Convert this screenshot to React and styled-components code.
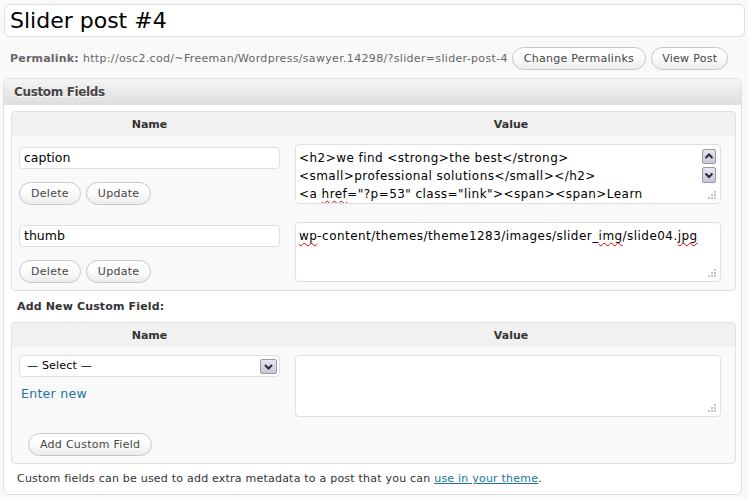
import React from 'react';
import styled, { createGlobalStyle } from 'styled-components';

const Global = createGlobalStyle`
  html, body { margin: 0; padding: 0; background: #f9f9f9; }
  body { font-family: "DejaVu Sans", Verdana, sans-serif; color: #333; font-size: 11px; }
  * { box-sizing: border-box; }
`;

const Page = styled.div`
  width: 748px;
  height: 499px;
  padding: 4px 3px 0 3px;
  display: flex;
  flex-direction: column;
`;

const TitleBox = styled.div`
  margin-left: 1px;
  width: 741px;
  height: 33px;
  background: #fff;
  border: 1px solid #dfdfdf;
  border-radius: 6px;
  font-size: 22px;
  line-height: 31px;
  padding-left: 5px;
  color: #000;
`;

const PermaRow = styled.div`
  margin-top: 10px;
  height: 22px;
  display: flex;
  align-items: center;
  padding-left: 7px;
  color: #666;
  font-size: 11px;
  letter-spacing: 0.33px;
`;

const PermaLabel = styled.strong`
  color: #666;
  margin-right: 4px;
  letter-spacing: 0.2px;
`;

const Button = styled.span`
  display: inline-flex;
  align-items: center;
  justify-content: center;
  height: 23px;
  padding: 0 ${p => p.$pad || 9}px;
  margin-left: ${p => p.$ml || 0}px;
  border: 1px solid #c8c8c8;
  border-radius: 12px;
  background: linear-gradient(#ffffff 0%, #fbfbfb 50%, #ececec 100%);
  color: #464646;
  font-size: 11px;
  letter-spacing: 0.28px;
  white-space: nowrap;
  flex: none;
`;

const Box = styled.div`
  margin-top: 9px;
  width: 739px;
  background: #fff;
  border: 1px solid #dfdfdf;
  border-radius: 6px;
  overflow: hidden;
`;

const BoxHeader = styled.div`
  height: 26px;
  background: linear-gradient(#f5f5f5, #dedede);
  padding-left: 10px;
  display: flex;
  align-items: center;
  font-weight: bold;
  font-size: 12px;
  letter-spacing: -0.35px;
  color: #464646;
  text-shadow: 0 1px 0 #fff;
`;

const BoxBody = styled.div`
  padding: 6px 5px 0 7px;
`;

const Table = styled.div`
  border: 1px solid #dfdfdf;
  border-radius: 4px;
  background: #f9f9f9;
  overflow: hidden;
`;

const HeadRow = styled.div`
  display: grid;
  grid-template-columns: 275px 1fr;
  height: 24px;
  background: #f1f1f1;
  font-weight: bold;
  font-size: 11px;
  color: #333;
`;

const HeadCell = styled.div`
  display: flex;
  align-items: center;
  justify-content: center;
`;

const Row = styled.div`
  display: grid;
  grid-template-columns: 275px 1fr;
  align-items: start;
  padding-bottom: ${p => p.$pb || 0}px;
`;

const LeftCell = styled.div`
  padding: ${p => p.$pt ?? 11}px 8px 0 7px;
  display: flex;
  flex-direction: column;
  align-items: flex-start;
`;

const RightCell = styled.div`
  padding: ${p => p.$pt ?? 8}px 14px 0 8px;
`;

const TextInput = styled.div`
  width: 261px;
  height: 22px;
  background: #fff;
  border: 1px solid #dfdfdf;
  border-radius: 4px;
  padding-left: 4px;
  font-size: 12.5px;
  line-height: 20px;
  color: #000;
`;

const ButtonRow = styled.div`
  display: flex;
  gap: 5px;
  margin-top: 13px;
`;

const Area = styled.div`
  position: relative;
  width: 426px;
  height: ${p => p.$h || 60}px;
  background: #fff;
  border: 1px solid #dfdfdf;
  border-radius: 4px;
  padding: 4px 0 0 3px;
  font-size: 12px;
  line-height: 18px;
  letter-spacing: 0.45px;
  color: #000;
  overflow: hidden;
  white-space: nowrap;
`;

const Spell = styled.span`
  text-decoration: underline wavy #e00000;
  text-decoration-thickness: 1px;
  text-underline-offset: 2px;
`;

const ScrollBtn = styled.svg`
  position: absolute;
  left: 406px;
  top: ${p => p.$top}px;
`;

const Grip = styled.svg`
  position: absolute;
  right: 4px;
  bottom: 4px;
`;

const SelectBox = styled.div`
  position: relative;
  width: 261px;
  height: 22px;
  background: #fff;
  border: 1px solid #dfdfdf;
  border-radius: 4px;
  padding-left: 7px;
  font-size: 11px;
  line-height: 20px;
  letter-spacing: 0.2px;
  color: #000;
`;

const DropBtn = styled.svg`
  position: absolute;
  left: 240px;
  top: 3px;
`;

const Link = styled.a`
  color: #21759b;
  text-decoration: ${p => (p.$u ? 'underline' : 'none')};
`;

const EnterNew = styled(Link)`
  margin-top: 9px;
  margin-left: 2px;
  font-size: 12.5px;
  line-height: 15px;
  letter-spacing: 0.3px;
`;

const SectionLabel = styled.div`
  height: 31px;
  line-height: 31px;
  padding-left: 6px;
  font-weight: bold;
  font-size: 11px;
  letter-spacing: 0.15px;
  color: #333;
`;

const Footer = styled.div`
  height: 30px;
  line-height: 30px;
  padding-left: 6px;
  font-size: 11px;
  letter-spacing: 0.22px;
  color: #333;
`;

const SubmitRow = styled.div`
  padding: 8px 0 7px 16px;
`;

const ArrowButton = ({ dir, w = 14, h = 15 }) => (
  <>
    <defs>
      <linearGradient id={`g${dir}${w}${h}`} x1="0" y1="0" x2="0" y2="1">
        <stop offset="0" stopColor="#e8e8f0" />
        <stop offset="1" stopColor="#c6c6d6" />
      </linearGradient>
    </defs>
    <rect x="0.5" y="0.5" width={w - 1} height={h - 1} rx="1.5" fill={`url(#g${dir}${w}${h})`} stroke="#9a9aae" />
    {dir === 'up' ? (
      <path d={`M${w / 2 - 3.5} ${h / 2 + 1.5} L${w / 2} ${h / 2 - 2} L${w / 2 + 3.5} ${h / 2 + 1.5}`} fill="none" stroke="#2a2a3a" strokeWidth="2" />
    ) : (
      <path d={`M${w / 2 - 3.5} ${h / 2 - 1.5} L${w / 2} ${h / 2 + 2} L${w / 2 + 3.5} ${h / 2 - 1.5}`} fill="none" stroke="#2a2a3a" strokeWidth="2" />
    )}
  </>
);

const GripIcon = () => (
  <Grip width="8" height="8" viewBox="0 0 8 8">
    {[[6, 0], [3, 3], [6, 3], [0, 6], [3, 6], [6, 6]].map(([x, y]) => (
      <rect key={`${x}-${y}`} x={x} y={y} width="2" height="2" fill="#c4c4c4" />
    ))}
  </Grip>
);

export default function App() {
  return (
    <>
      <Global />
      <Page>
        <TitleBox>Slider post #4</TitleBox>
        <PermaRow>
          <PermaLabel>Permalink:</PermaLabel>
          <span>http://osc2.cod/~Freeman/Wordpress/sawyer.14298/?slider=slider-post-4</span>
          <Button $ml={4} $pad={11}>Change Permalinks</Button>
          <Button $ml={5} $pad={10}>View Post</Button>
        </PermaRow>
        <Box>
          <BoxHeader>Custom Fields</BoxHeader>
          <BoxBody>
            <Table>
              <HeadRow>
                <HeadCell>Name</HeadCell>
                <HeadCell>Value</HeadCell>
              </HeadRow>
              <Row $pb={9}>
                <LeftCell>
                  <TextInput>caption</TextInput>
                  <ButtonRow>
                    <Button $pad={11}>Delete</Button>
                    <Button $pad={11}>Update</Button>
                  </ButtonRow>
                </LeftCell>
                <RightCell>
                  <Area>
                    <div>&lt;h2&gt;we find &lt;strong&gt;the best&lt;/strong&gt;</div>
                    <div>&lt;small&gt;professional solutions&lt;/small&gt;&lt;/h2&gt;</div>
                    <div>&lt;a <Spell>href</Spell>="?p=53" class="link"&gt;&lt;span&gt;&lt;span&gt;Learn</div>
                    <ScrollBtn $top={4} width="14" height="15"><ArrowButton dir="up" w={14} h={15} /></ScrollBtn>
                    <ScrollBtn $top={22} width="14" height="16"><ArrowButton dir="down" w={14} h={16} /></ScrollBtn>
                    <GripIcon />
                  </Area>
                </RightCell>
              </Row>
              <Row $pb={7}>
                <LeftCell>
                  <TextInput>thumb</TextInput>
                  <ButtonRow>
                    <Button $pad={11}>Delete</Button>
                    <Button $pad={11}>Update</Button>
                  </ButtonRow>
                </LeftCell>
                <RightCell>
                  <Area>
                    <div><Spell>wp</Spell>-content/themes/theme1283/images/slider_<Spell>img</Spell>/slide04.<Spell>jpg</Spell></div>
                    <GripIcon />
                  </Area>
                </RightCell>
              </Row>
            </Table>
            <SectionLabel>Add New Custom Field:</SectionLabel>
            <Table>
              <HeadRow>
                <HeadCell>Name</HeadCell>
                <HeadCell>Value</HeadCell>
              </HeadRow>
              <Row $pb={8}>
                <LeftCell $pt={8}>
                  <SelectBox>
                    — Select —
                    <DropBtn width="17" height="15"><ArrowButton dir="down" w={17} h={15} /></DropBtn>
                  </SelectBox>
                  <EnterNew href="#">Enter new</EnterNew>
                </LeftCell>
                <RightCell $pt={8}>
                  <Area $h={62}>
                    <GripIcon />
                  </Area>
                </RightCell>
              </Row>
              <SubmitRow>
                <Button $pad={11}>Add Custom Field</Button>
              </SubmitRow>
            </Table>
            <Footer>
              Custom fields can be used to add extra metadata to a post that you can <Link $u href="#">use in your theme</Link>.
            </Footer>
          </BoxBody>
        </Box>
      </Page>
    </>
  );
}
